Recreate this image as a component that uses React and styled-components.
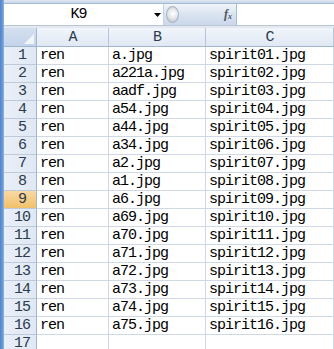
import React from "react";
import styled, { createGlobalStyle } from "styled-components";

const GlobalStyle = createGlobalStyle`
  html, body {
    margin: 0;
    padding: 0;
    background: #ffffff;
    overflow: hidden;
  }
`;

const rows = [
  ["ren", "a.jpg", "spirit01.jpg"],
  ["ren", "a221a.jpg", "spirit02.jpg"],
  ["ren", "aadf.jpg", "spirit03.jpg"],
  ["ren", "a54.jpg", "spirit04.jpg"],
  ["ren", "a44.jpg", "spirit05.jpg"],
  ["ren", "a34.jpg", "spirit06.jpg"],
  ["ren", "a2.jpg", "spirit07.jpg"],
  ["ren", "a1.jpg", "spirit08.jpg"],
  ["ren", "a6.jpg", "spirit09.jpg"],
  ["ren", "a69.jpg", "spirit10.jpg"],
  ["ren", "a70.jpg", "spirit11.jpg"],
  ["ren", "a71.jpg", "spirit12.jpg"],
  ["ren", "a72.jpg", "spirit13.jpg"],
  ["ren", "a73.jpg", "spirit14.jpg"],
  ["ren", "a74.jpg", "spirit15.jpg"],
  ["ren", "a75.jpg", "spirit16.jpg"],
  ["", "", ""],
];

const App = () => {
  return (
    <Frame>
      <GlobalStyle />
      <SideStrip />
      <Main>
        <TopStrip />
        <FormulaBar>
          <NameBox>K9</NameBox>
          <Dropdown>
            <svg width="7" height="4" viewBox="0 0 7 4">
              <path d="M0 0 L7 0 L3.5 4 Z" fill="#000" />
            </svg>
          </Dropdown>
          <FxPanel>
            <Knob />
            <Fx>f<sub>x</sub></Fx>
          </FxPanel>
          <FormulaInput />
        </FormulaBar>
        <Spacer />
        <Sheet>
          <Corner>
            <svg width="10" height="10" viewBox="0 0 10 10">
              <path d="M10 0 L10 10 L0 10 Z" fill="#ffffff" opacity="0.75" />
            </svg>
          </Corner>
          <ColHead>A</ColHead>
          <ColHead>B</ColHead>
          <ColHead>C</ColHead>
          {rows.map((row, i) => (
            <React.Fragment key={i}>
              <RowHead $active={i === 8}>{i + 1}</RowHead>
              {row.map((cell, j) => (
                <Cell key={j}>{cell}</Cell>
              ))}
            </React.Fragment>
          ))}
        </Sheet>
      </Main>
    </Frame>
  );
};

export default App;

// monospace at 8px per character, like the sheet's SimSun
const mono = `"Liberation Mono", "Noto Sans CJK SC", monospace`;

const Frame = styled.div`
  display: flex;
  width: 334px;
  height: 349px;
  overflow: hidden;
  background: #ffffff;
`;

const SideStrip = styled.div`
  width: 4px;
  flex: none;
  background: linear-gradient(to right, #4f86cf, #6c9ad8 70%, #a9b8c9);
`;

const Main = styled.div`
  flex: 1;
  display: flex;
  flex-direction: column;
  min-width: 0;
  > * {
    flex: none;
  }
`;

const TopStrip = styled.div`
  height: 4px;
  background: linear-gradient(to bottom, #dfe7f1, #c9d7e8);
  border-bottom: 1px solid #a7bad3;
  box-sizing: border-box;
`;

const FormulaBar = styled.div`
  display: flex;
  height: 21px;
  align-items: stretch;
  background: #ffffff;
`;

const NameBox = styled.div`
  width: 145px;
  display: flex;
  align-items: center;
  justify-content: center;
  font-family: ${mono};
  font-size: 15px;
  letter-spacing: -1px;
  color: #000;
  padding-left: 2px;
`;

const Dropdown = styled.div`
  width: 12px;
  display: flex;
  align-items: center;
  justify-content: center;
  padding-top: 1px;
`;

const FxPanel = styled.div`
  width: 74px;
  display: flex;
  align-items: center;
  justify-content: space-between;
  padding: 0 4px 0 2px;
  box-sizing: border-box;
  background: linear-gradient(to bottom, #f1f5fb, #dae4f1 50%, #cad8ea);
  border-left: 1px solid #c4d2e3;
  border-right: 1px solid #a9bcd5;
`;

const Knob = styled.div`
  width: 13px;
  height: 17px;
  border-radius: 50%;
  background: radial-gradient(circle at 55% 45%, #ffffff, #e3e7ec 45%, #b3bcc7);
  border: 1px solid #a8b2bf;
  box-sizing: border-box;
`;

const Fx = styled.div`
  font-family: "Liberation Serif", serif;
  font-style: italic;
  font-weight: bold;
  font-size: 12px;
  color: #4a5563;
  sub {
    font-size: 8px;
    vertical-align: -1px;
  }
`;

const FormulaInput = styled.div`
  flex: 1;
  background: #ffffff;
`;

const Spacer = styled.div`
  height: 3px;
  background: #e4e9f0;
  border-top: 1px solid #b8c6d8;
  box-sizing: border-box;
`;

const Sheet = styled.div`
  display: grid;
  grid-template-columns: 33px 72px 97px 1fr;
  grid-auto-rows: 18px;
  grid-template-rows: 19px;
  font-family: ${mono};
  font-size: 15px;
  letter-spacing: -1px;
`;

const Corner = styled.div`
  display: flex;
  align-items: flex-end;
  justify-content: flex-end;
  padding: 0 2px 2px 0;
  box-sizing: border-box;
  background: linear-gradient(to bottom, #d4e0f0, #c3d3ea);
  border-right: 1px solid #9eb6ce;
  border-bottom: 1px solid #9eb6ce;
`;

const ColHead = styled.div`
  display: flex;
  align-items: center;
  justify-content: center;
  box-sizing: border-box;
  background: linear-gradient(to bottom, #f1f5fb, #e0e8f3);
  border-right: 1px solid #b5c6db;
  border-bottom: 1px solid #9eb6ce;
  color: #2b3a4d;
`;

const RowHead = styled.div`
  display: flex;
  align-items: center;
  justify-content: center;
  padding-left: 4px;
  box-sizing: border-box;
  background: ${(p) =>
    p.$active
      ? "linear-gradient(to bottom, #f9d9a3, #f2c06a)"
      : "linear-gradient(to right, #e9eff8, #e0e8f3)"};
  border-right: 1px solid #9eb6ce;
  border-bottom: 1px solid #bccadb;
  color: #2b3a4d;
`;

const Cell = styled.div`
  display: flex;
  align-items: center;
  padding-left: 3px;
  box-sizing: border-box;
  border-right: 1px solid #d0d7e5;
  border-bottom: 1px solid #d0d7e5;
  color: #000;
  white-space: nowrap;
  overflow: hidden;
`;
